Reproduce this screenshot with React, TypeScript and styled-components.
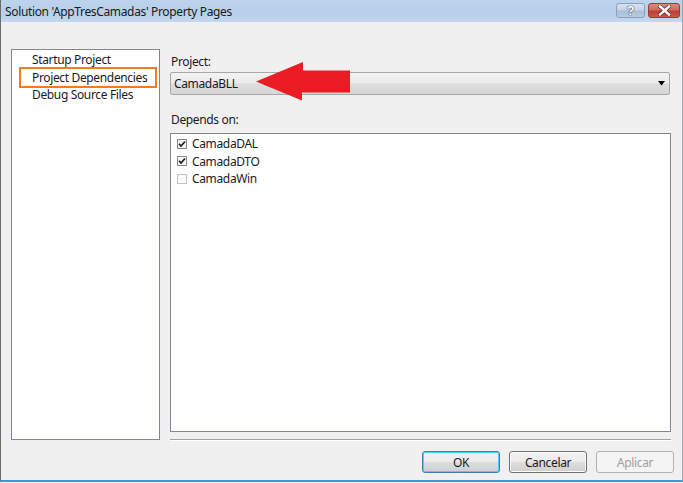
import React from "react";
import styled, { createGlobalStyle, css } from "styled-components";

const GlobalStyle = createGlobalStyle`
  html, body {
    margin: 0;
    padding: 0;
    background: #f0f0f0;
  }
  body {
    font-family: "Noto Sans", "Open Sans", sans-serif;
    font-size: 12px;
    letter-spacing: -0.35px;
    color: #1e1e1e;
  }
`;

const pages = ["Startup Project", "Project Dependencies", "Debug Source Files"];

const dependencies = [
  { name: "CamadaDAL", checked: true },
  { name: "CamadaDTO", checked: true },
  { name: "CamadaWin", checked: false },
];

const App: React.FC = () => {
  return (
    <>
      <GlobalStyle />
      <Window>
        <TitleBar>
          <Title>Solution 'AppTresCamadas' Property Pages</Title>
          <CaptionButtons>
            <HelpButton>?</HelpButton>
            <CloseButton>
              <svg width="13" height="11" viewBox="0 0 13 11">
                <path
                  d="M2 1.5 L11 9.5 M11 1.5 L2 9.5"
                  stroke="#7a2a22"
                  strokeWidth="4"
                  strokeLinecap="square"
                />
                <path
                  d="M2 1.5 L11 9.5 M11 1.5 L2 9.5"
                  stroke="#ffffff"
                  strokeWidth="2.4"
                  strokeLinecap="square"
                />
              </svg>
            </CloseButton>
          </CaptionButtons>
        </TitleBar>

        <Body>
          <Sidebar>
            {pages.map((p, i) => (
              <PageItem key={p} $selected={i === 1}>
                {p}
              </PageItem>
            ))}
          </Sidebar>

          <Main>
            <FieldLabel>Project:</FieldLabel>
            <ComboWrap>
              <Combo>
                <span>CamadaBLL</span>
                <svg width="7" height="5" viewBox="0 0 7 5">
                  <polygon points="0,0 7,0 3.5,4.5" fill="#000" />
                </svg>
              </Combo>
              <Pointer width="96" height="40" viewBox="0 0 96 40">
                <polygon
                  points="1,19.5 48,0 48,8.5 95,8.5 95,30.5 47,30.5 47,38.5"
                  fill="#ec1c24"
                />
              </Pointer>
            </ComboWrap>

            <FieldLabel $spaced>Depends on:</FieldLabel>
            <ListBox>
              {dependencies.map((d) => (
                <DepRow key={d.name}>
                  <CheckBox $checked={d.checked}>
                    {d.checked && (
                      <svg width="8" height="8" viewBox="0 0 8 8">
                        <path
                          d="M1 3.8 L3 6 L7 1.5"
                          stroke="#1a1a1a"
                          strokeWidth="1.6"
                          fill="none"
                        />
                      </svg>
                    )}
                  </CheckBox>
                  {d.name}
                </DepRow>
              ))}
            </ListBox>
            <Separator />
          </Main>
        </Body>

        <Footer>
          <DialogButton $focused>OK</DialogButton>
          <DialogButton>Cancelar</DialogButton>
          <DialogButton disabled>Aplicar</DialogButton>
        </Footer>
      </Window>
    </>
  );
};

const Window = styled.div`
  width: 683px;
  height: 482px;
  box-sizing: border-box;
  border-left: 1px solid #6b6b6b;
  border-right: 1px solid #9aa6b4;
  border-bottom: 2px solid #3a9ad9;
  background: #f0f0f0;
  display: flex;
  flex-direction: column;
`;

const TitleBar = styled.div`
  height: 22px;
  flex: none;
  display: flex;
  align-items: flex-start;
  justify-content: space-between;
  background: linear-gradient(#bcd3ec, #b7cfea 60%, #c3d8ee);
  box-sizing: border-box;
`;

const Title = styled.div`
  padding: 4px 0 0 4px;
  line-height: 16px;
  color: #1a1a1a;
`;

const CaptionButtons = styled.div`
  display: flex;
  gap: 3px;
  padding: 3px 2px 0 0;
`;

const captionBase = css`
  height: 15px;
  box-sizing: border-box;
  border-radius: 3px;
  display: flex;
  align-items: center;
  justify-content: center;
`;

const HelpButton = styled.div`
  ${captionBase};
  width: 29px;
  border: 1px solid #8aa0ba;
  background: linear-gradient(#d6e2f0 0%, #c3d3e6 45%, #a9bfd8 55%, #b8cce2 100%);
  color: #fff;
  font-family: "Liberation Sans", sans-serif;
  font-weight: bold;
  font-size: 13px;
  letter-spacing: 0;
  text-shadow: 0 0 1px #3c4c60, 0 0 1px #3c4c60, 0 0 1px #3c4c60;
`;

const CloseButton = styled.div`
  ${captionBase};
  width: 32px;
  border: 1px solid #9a3b32;
  background: linear-gradient(#dc8a80 0%, #cf6a5e 45%, #bb3f32 55%, #c9584a 100%);
`;

const Body = styled.div`
  height: 419px;
  flex: none;
  display: flex;
  align-items: flex-start;
  box-sizing: border-box;
  padding: 27px 0 0 10px;
`;

const Sidebar = styled.div`
  width: 149px;
  height: 391px;
  flex: none;
  box-sizing: border-box;
  border: 1px solid #828790;
  background: #fff;
  padding-top: 1px;
`;

const PageItem = styled.div<{ $selected?: boolean }>`
  margin-left: 9px;
  width: 134px;
  height: 17.5px;
  line-height: 17.5px;
  padding-left: 11px;
  box-sizing: border-box;
  color: #1a1a1a;
  white-space: nowrap;
  ${(p) =>
    p.$selected &&
    css`
      outline: 2px solid #f47b20;
    `}
`;

const Main = styled.div`
  margin-left: 10px;
  width: 501px;
  height: 392px;
  display: flex;
  flex-direction: column;
  padding-top: 5px;
  box-sizing: border-box;
`;

const FieldLabel = styled.div<{ $spaced?: boolean }>`
  line-height: 16px;
  padding-left: 1px;
  margin-bottom: ${(p) => (p.$spaced ? "5px" : "2px")};
  margin-top: ${(p) => (p.$spaced ? "17px" : "0")};
  color: #1a1a1a;
`;

const ComboWrap = styled.div`
  position: relative;
  width: 500px;
`;

const Combo = styled.div`
  height: 23px;
  box-sizing: border-box;
  border: 1px solid #a7a7a7;
  border-radius: 2px;
  background: linear-gradient(#f3f3f3 0%, #ebebeb 48%, #dddddd 52%, #d6d6d6 100%);
  display: flex;
  align-items: center;
  justify-content: space-between;
  padding: 0 4px 0 3px;
  color: #1a1a1a;
`;

const Pointer = styled.svg`
  position: absolute;
  left: 85px;
  top: -10px;
`;

const ListBox = styled.div`
  flex: 1;
  border: 1px solid #828790;
  background: #fff;
  padding: 1px 0 0 6px;
  box-sizing: border-box;
`;

const DepRow = styled.div`
  height: 17.5px;
  display: flex;
  align-items: center;
  gap: 5px;
  color: #1a1a1a;
`;

const CheckBox = styled.div<{ $checked?: boolean }>`
  width: 10px;
  height: 10px;
  box-sizing: border-box;
  border: 1px solid ${(p) => (p.$checked ? "#8a8a8a" : "#c4c4c4")};
  background: ${(p) => (p.$checked ? "#f4f4f4" : "#fafafa")};
  display: flex;
  align-items: center;
  justify-content: center;
`;

const Separator = styled.div`
  margin-top: 7px;
  height: 2px;
  flex: none;
  border-top: 1px solid #a0a0a0;
  border-bottom: 1px solid #ffffff;
  box-sizing: border-box;
`;

const Footer = styled.div`
  flex: 1;
  display: flex;
  justify-content: flex-end;
  gap: 9px;
  padding: 10px 8px 0 0;
  box-sizing: border-box;
`;

const DialogButton = styled.button<{ $focused?: boolean }>`
  width: 78px;
  height: 22px;
  box-sizing: border-box;
  border-radius: 3px;
  font-family: inherit;
  font-size: 12px;
  letter-spacing: -0.35px;
  padding: 0;
  color: #1a1a1a;
  border: 1px solid ${(p) => (p.$focused ? "#3c7fb1" : "#707070")};
  background: linear-gradient(#f2f2f2 0%, #ebebeb 48%, #dddddd 52%, #cfcfcf 100%);
  box-shadow: ${(p) =>
    p.$focused ? "inset 0 0 0 1px #48d2fb" : "inset 0 0 0 1px #fcfcfc"};
  &:disabled {
    border-color: #adb2b5;
    background: #f4f4f4;
    box-shadow: none;
    color: #a0a0a0;
  }
`;

export default App;
